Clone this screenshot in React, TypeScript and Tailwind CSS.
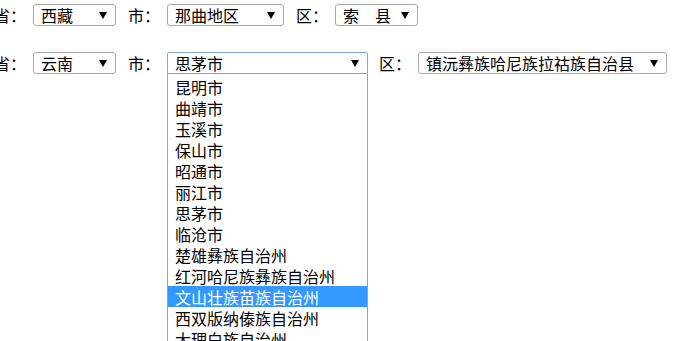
import React from "react";

const cities = [
    "昆明市",
    "曲靖市",
    "玉溪市",
    "保山市",
    "昭通市",
    "丽江市",
    "思茅市",
    "临沧市",
    "楚雄彝族自治州",
    "红河哈尼族彝族自治州",
    "文山壮族苗族自治州",
    "西双版纳傣族自治州",
    "大理白族自治州",
];

const Arrow = () => (
    <svg width="8" height="7" viewBox="0 0 8 7" className="shrink-0">
        <polygon points="0,0 8,0 4,7" fill="#000" />
    </svg>
);

interface SelProps {
    text: string;
    w: string;
    focused?: boolean;
    children?: React.ReactNode;
}

const Sel = ({ text, w, focused, children }: SelProps) => {
    return (
        <div className={`relative ${w} h-[22px]`}>
            <div
                className={`flex h-full items-center justify-between pl-[7px] pr-[8px] bg-white border ${focused ? "border-[#7ea6d8] rounded-t-[2px]" : "border-[#a9a9a9] rounded-[3px]"}`}
            >
                <span className="whitespace-pre leading-none">{text}</span>
                <Arrow />
            </div>
            {children}
        </div>
    );
};

const Label = ({ text }: { text: string }) => (
    <span className="w-[32px] mr-[7px] leading-none whitespace-nowrap">{text}</span>
);

export default function App() {
    return (
        <div className="w-[676px] h-[341px] overflow-hidden bg-white text-black text-[16px] font-['Noto_Sans_CJK_SC','Noto_Sans',sans-serif]">
            <div className="flex flex-col pt-[4px] gap-[26px]">
                <div className="flex items-center ml-[-6px]">
                    <Label text="省：" />
                    <Sel text="西藏" w="w-[83px]" />
                    <span className="ml-[12px]" />
                    <Label text="市：" />
                    <Sel text="那曲地区" w="w-[117px]" />
                    <span className="ml-[12px]" />
                    <Label text="区：" />
                    <Sel text="索　县" w="w-[83px]" />
                </div>
                <div className="flex items-center ml-[-6px]">
                    <Label text="省：" />
                    <Sel text="云南" w="w-[83px]" />
                    <span className="ml-[12px]" />
                    <Label text="市：" />
                    <Sel text="思茅市" w="w-[201px]" focused>
                        <div className="absolute left-0 top-full w-full h-[300px] pt-[2px] bg-white border-x border-[#7ea6d8]">
                            {cities.map((c) => (
                                <div
                                    key={c}
                                    className={`h-[21px] flex items-center pl-[7px] leading-none whitespace-nowrap ${c === "文山壮族苗族自治州" ? "bg-[#3399ff] text-white" : ""}`}
                                >
                                    {c}
                                </div>
                            ))}
                        </div>
                    </Sel>
                    <span className="ml-[11px]" />
                    <Label text="区：" />
                    <Sel text="镇沅彝族哈尼族拉祜族自治县" w="w-[249px]" />
                </div>
            </div>
        </div>
    );
}
